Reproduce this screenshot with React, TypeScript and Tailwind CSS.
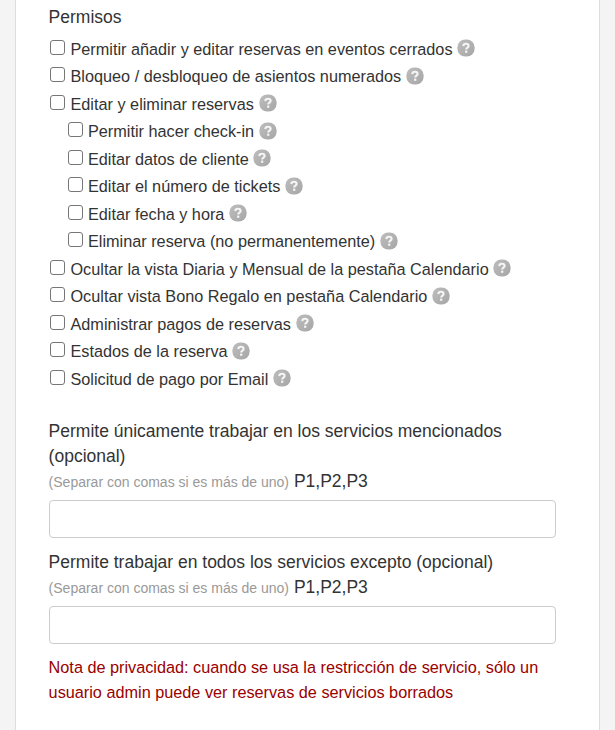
const permissions = [
  { label: "Permitir añadir y editar reservas en eventos cerrados" },
  { label: "Bloqueo / desbloqueo de asientos numerados" },
  { label: "Editar y eliminar reservas" },
  { label: "Permitir hacer check-in", nested: true },
  { label: "Editar datos de cliente", nested: true },
  { label: "Editar el número de tickets", nested: true },
  { label: "Editar fecha y hora", nested: true },
  { label: "Eliminar reserva (no permanentemente)", nested: true },
  { label: "Ocultar la vista Diaria y Mensual de la pestaña Calendario" },
  { label: "Ocultar vista Bono Regalo en pestaña Calendario" },
  { label: "Administrar pagos de reservas" },
  { label: "Estados de la reserva" },
  { label: "Solicitud de pago por Email" },
];

const HelpIcon = () => {
  return (
    <svg viewBox="0 0 18 18" className="w-[18px] h-[18px] ml-[4.7px] mb-[2.5px] shrink-0">
      <defs>
        <linearGradient id="help" x1="0" y1="0" x2="1" y2="1">
          <stop offset="0" stopColor="#bdbdbd" />
          <stop offset="1" stopColor="#a6a6a6" />
        </linearGradient>
      </defs>
      <rect x="0.4" y="0.4" width="17.2" height="17.2" rx="7.8" fill="url(#help)" />
      <path
        d="M6.3 7.1C6.4 5.5 7.4 4.8 9 4.8C10.6 4.8 11.6 5.6 11.6 6.9C11.6 8.6 9.2 8.5 9.2 10.5"
        fill="none"
        stroke="#f5f5f5"
        strokeWidth="2.1"
      />
      <rect x="8.1" y="11.6" width="2.2" height="2.2" fill="#f5f5f5" />
    </svg>
  );
};

const Permission = ({ label, nested }: { label: string; nested?: boolean }) => {
  return (
    <label className={`flex items-center h-[27.5px] text-[16.25px] ${nested ? "pl-[19px]" : "pl-[1.5px]"}`}>
      <input
        type="checkbox"
        className="appearance-none w-[15px] h-[15px] mr-[5.4px] mb-[4px] shrink-0 bg-white border border-[#767676] rounded-[3px]"
      />
      <span className="whitespace-nowrap">{label}</span>
      <HelpIcon />
    </label>
  );
};

const ServiceField = ({ label }: { label: string }) => {
  return (
    <label className="block mb-[12px]">
      <span className="block">{label}</span>
      <span className="block">
        <span className="text-[14px] text-[#999]">(Separar con comas si es más de uno)</span> P1,P2,P3
      </span>
      <input
        type="text"
        className="block w-[507px] h-[38px] mt-[5px] px-3 bg-white border border-[#ccc] rounded-[4px]"
      />
    </label>
  );
};

const App = () => {
  return (
    <div className="bg-[#f4f4f4] h-screen overflow-hidden px-[15px] font-['Liberation_Sans',Arial,sans-serif] text-[17.5px] leading-[25px] text-[#333]">
      <div className="bg-white h-full border-x border-[#ddd] pl-[32.6px] pr-[43px] pt-[5px]">
        <h2>Permisos</h2>
        <div className="mt-[5.5px] mb-[25.5px]">
          {permissions.map((item) => (
            <Permission key={item.label} label={item.label} nested={item.nested} />
          ))}
        </div>
        <ServiceField label="Permite únicamente trabajar en los servicios mencionados (opcional)" />
        <ServiceField label="Permite trabajar en todos los servicios excepto (opcional)" />
        <p className="-mt-px text-[16.25px] text-[#990000]">
          Nota de privacidad: cuando se usa la restricción de servicio, sólo un usuario admin puede ver
          reservas de servicios borrados
        </p>
      </div>
    </div>
  );
};

export default App;
